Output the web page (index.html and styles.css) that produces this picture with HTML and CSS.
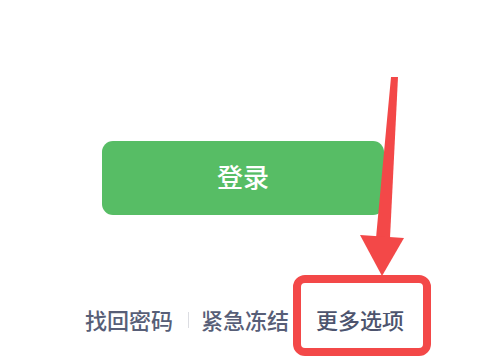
FILE: index.html
```html
<!DOCTYPE html>
<html lang="zh-CN">
<head>
  <meta charset="UTF-8" />
  <meta name="viewport" content="width=device-width, initial-scale=1.0"/>
  <title>登录</title>
  <link rel="stylesheet" href="styles.css">
</head>
<body>
  <div class="page">
    <button class="login-btn">登录</button>

    <div class="links">
      <a class="link">找回密码</a>
      <span class="sep"></span>
      <a class="link">紧急冻结</a>
      <a class="link more">更多选项</a>
    </div>
  </div>

  <svg class="mark" width="499" height="361" viewBox="0 0 499 361">
    <polygon points="391,77 398,77 390,238 376,238" fill="#f34848"/>
    <polygon points="360,235 404,238 382,276" fill="#f34848"/>
    <rect x="297" y="279" width="130" height="73" rx="8" fill="none" stroke="#f34848" stroke-width="8"/>
  </svg>
</body>
</html>
```

FILE: styles.css
```css
body {
  margin: 0;
  background-color: #fff;
  font-family: "Noto Sans CJK SC", "Noto Sans", sans-serif;
}
.page {
  padding-top: 141px;
}
.login-btn {
  display: block;
  margin-left: 102px;
  width: 282px;
  height: 74px;
  border: none;
  border-radius: 11px;
  background-color: #57bd65;
  color: #fff;
  font-family: inherit;
  font-size: 26px;
  font-weight: 500;
  line-height: 1;
  padding: 0 0 4px;
}
.links {
  display: flex;
  align-items: center;
  margin-top: 89px;
  padding-left: 85px;
  height: 30px;
}
.link {
  color: #575e77;
  font-size: 22px;
  font-weight: 500;
  line-height: 30px;
}
.sep {
  width: 1px;
  height: 16px;
  background-color: #dcdde2;
  margin: 2px 12px 0 15px;
}
.more {
  margin-left: 27px;
  color: #4d546e;
}
.mark {
  position: absolute;
  left: 0;
  top: 0;
}
```
